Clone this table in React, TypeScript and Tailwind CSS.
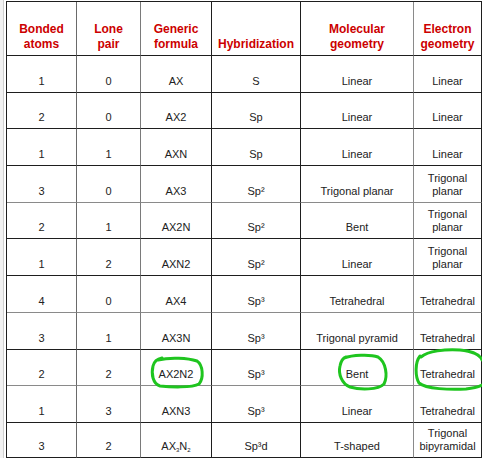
import type { ReactNode } from "react";

type Row = {
  bonded: string;
  lone: string;
  formula: ReactNode;
  hybrid: string;
  molecular: string;
  electron: ReactNode;
  height: string;
  line: string;
};

const DARK = "border-b-[#1e1e1e]";
const GRAY = "border-b-[#8a8a8a]";

const rows: Row[] = [
  { bonded: "1", lone: "0", formula: "AX", hybrid: "S", molecular: "Linear", electron: "Linear", height: "h-[37px]", line: DARK },
  { bonded: "2", lone: "0", formula: "AX2", hybrid: "Sp", molecular: "Linear", electron: "Linear", height: "h-[36px]", line: DARK },
  { bonded: "1", lone: "1", formula: "AXN", hybrid: "Sp", molecular: "Linear", electron: "Linear", height: "h-[37px]", line: DARK },
  { bonded: "3", lone: "0", formula: "AX3", hybrid: "Sp²", molecular: "Trigonal planar", electron: <>Trigonal<br />planar</>, height: "h-[37px]", line: GRAY },
  { bonded: "2", lone: "1", formula: "AX2N", hybrid: "Sp²", molecular: "Bent", electron: <>Trigonal<br />planar</>, height: "h-[36px]", line: DARK },
  { bonded: "1", lone: "2", formula: "AXN2", hybrid: "Sp²", molecular: "Linear", electron: <>Trigonal<br />planar</>, height: "h-[37px]", line: DARK },
  { bonded: "4", lone: "0", formula: "AX4", hybrid: "Sp³", molecular: "Tetrahedral", electron: "Tetrahedral", height: "h-[37px]", line: GRAY },
  { bonded: "3", lone: "1", formula: "AX3N", hybrid: "Sp³", molecular: "Trigonal pyramid", electron: "Tetrahedral", height: "h-[37px]", line: DARK },
  { bonded: "2", lone: "2", formula: "AX2N2", hybrid: "Sp³", molecular: "Bent", electron: "Tetrahedral", height: "h-[36px]", line: GRAY },
  { bonded: "1", lone: "3", formula: "AXN3", hybrid: "Sp³", molecular: "Linear", electron: "Tetrahedral", height: "h-[37px]", line: DARK },
  {
    bonded: "3",
    lone: "2",
    formula: (
      <>
        AX<sub className="text-[6px] align-baseline relative top-[2px]">3</sub>N
        <sub className="text-[6px] align-baseline relative top-[2px]">2</sub>
      </>
    ),
    hybrid: "Sp³d",
    molecular: "T-shaped",
    electron: <>Trigonal<br />bipyramidal</>,
    height: "h-[35px]",
    line: DARK,
  },
];

const colBorders = [
  "border-r-[#6a6a6a]",
  "border-r-[#7a7a7a]",
  "border-r-[#1e1e1e]",
  "border-r-[#1e1e1e]",
  "border-r-[#8a8a8a]",
  "border-r-[#1e1e1e]",
];

function Cell({ children, col, line, height, head }: { children: ReactNode; col: number; line: string; height: string; head?: boolean }) {
  return (
    <div
      className={`flex flex-col items-center justify-end text-center border-r border-b ${colBorders[col]} ${line} ${height} ${
        head ? "pb-[3px] text-[12px] leading-[15px] font-bold text-[#cc0000]" : "pb-[4px] text-[11px] leading-[13px] text-[#222]"
      }`}
    >
      <div>{children}</div>
    </div>
  );
}

function Ring({ d }: { d: string }) {
  return <path d={d} fill="none" stroke="#1fc51f" strokeWidth={3} strokeLinecap="round" strokeLinejoin="round" />;
}

export default function App() {
  const headers: ReactNode[] = [
    <>Bonded<br />atoms</>,
    <>Lone<br />pair</>,
    <>Generic<br />formula</>,
    "Hybridization",
    <>Molecular<br />geometry</>,
    <>Electron<br />geometry</>,
  ];

  return (
    <div className="relative w-[482px] h-[459px] overflow-hidden bg-[#e4e4e4] font-['Liberation_Sans',Arial,sans-serif]">
      <div className="flex bg-white">
        <div className="w-[3px] bg-[#f2f2f2]" />
        <div className="w-[1px] bg-[#cfcfcf]" />
        <div className="w-[2px] bg-white" />
        <div className="mt-[1px] border-l border-t border-l-[#1e1e1e] border-t-[#1e1e1e]">
          <div className="grid grid-cols-[70px_64px_71px_89px_113px_68px]">
            {headers.map((h, i) => (
              <Cell key={i} col={i} line={DARK} height="h-[54px]" head>
                {h}
              </Cell>
            ))}
            {rows.map((r, ri) =>
              [r.bonded, r.lone, r.formula, r.hybrid, r.molecular, r.electron].map((v, ci) => (
                <Cell key={`${ri}-${ci}`} col={ci} line={r.line} height={r.height}>
                  {v}
                </Cell>
              ))
            )}
          </div>
        </div>
      </div>
      <div className="h-[1px] bg-white" />

      <svg className="absolute left-0 top-0 pointer-events-none" width={482} height={459} viewBox="0 0 482 459">
        <Ring d="M158 360 C170 357 188 358 197 361 C203 365 204 378 199 384 C192 388 170 387 160 386 C153 384 151 374 153 366 C154 362 157 359 162 358" />
        <Ring d="M344 358 C352 355 370 354 378 357 C386 362 388 376 384 384 C378 390 360 390 350 387 C342 384 338 374 340 366 C341 361 343 358 346 357" />
        <Ring d="M421 357 C428 351 445 349 460 350 C472 351 480 355 482 360 M420 356 C415 362 415 376 419 383 C426 389 450 390 466 389 C474 388 480 386 482 385" />
      </svg>
    </div>
  );
}
